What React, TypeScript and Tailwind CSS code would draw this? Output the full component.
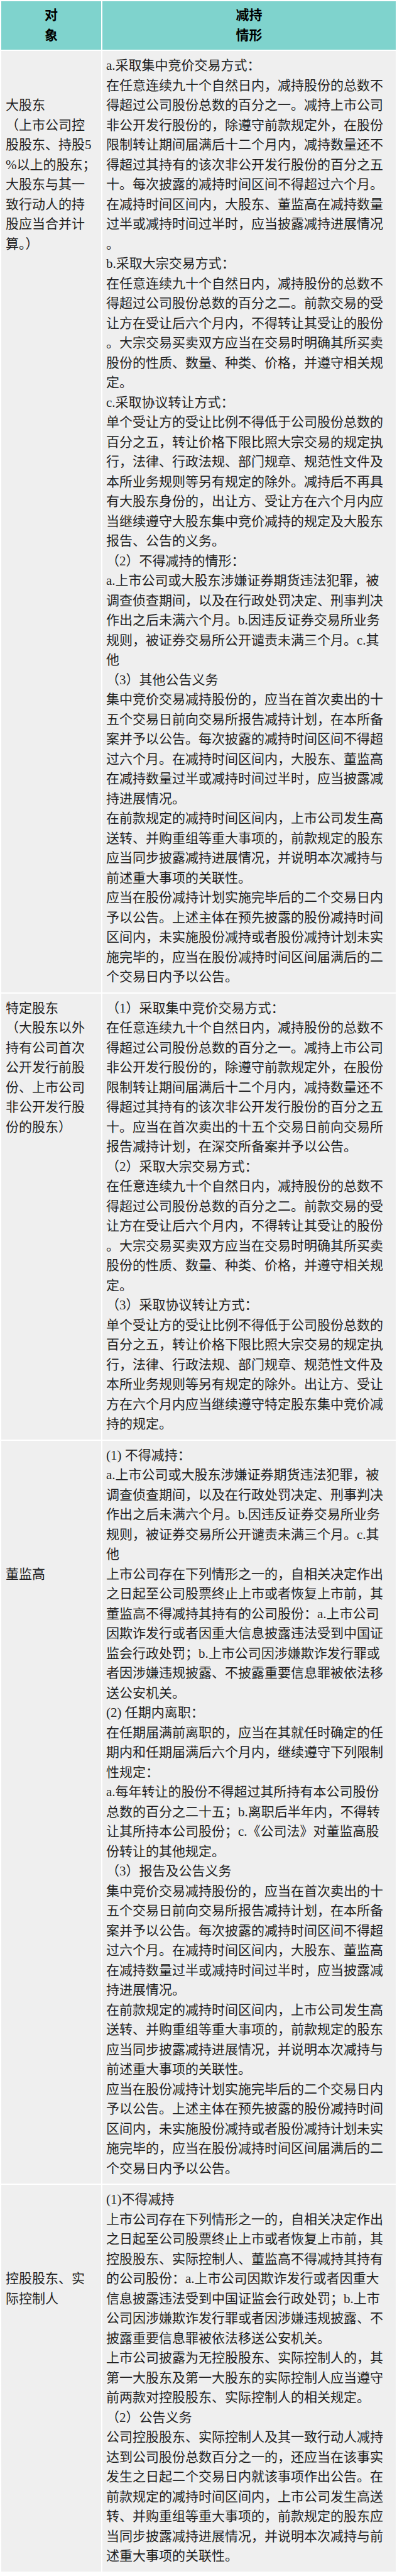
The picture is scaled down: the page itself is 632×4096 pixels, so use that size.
const row1 = [
  "a.采取集中竞价交易方式：",
  "在任意连续九十个自然日内，减持股份的总数不",
  "得超过公司股份总数的百分之一。减持上市公司",
  "非公开发行股份的，除遵守前款规定外，在股份",
  "限制转让期间届满后十二个月内，减持数量还不",
  "得超过其持有的该次非公开发行股份的百分之五",
  "十。每次披露的减持时间区间不得超过六个月。",
  "在减持时间区间内，大股东、董监高在减持数量",
  "过半或减持时间过半时，应当披露减持进展情况",
  "。",
  "b.采取大宗交易方式：",
  "在任意连续九十个自然日内，减持股份的总数不",
  "得超过公司股份总数的百分之二。前款交易的受",
  "让方在受让后六个月内，不得转让其受让的股份",
  "。大宗交易买卖双方应当在交易时明确其所买卖",
  "股份的性质、数量、种类、价格，并遵守相关规",
  "定。",
  "c.采取协议转让方式：",
  "单个受让方的受让比例不得低于公司股份总数的",
  "百分之五，转让价格下限比照大宗交易的规定执",
  "行，法律、行政法规、部门规章、规范性文件及",
  "本所业务规则等另有规定的除外。减持后不再具",
  "有大股东身份的，出让方、受让方在六个月内应",
  "当继续遵守大股东集中竞价减持的规定及大股东",
  "报告、公告的义务。",
  "（2）不得减持的情形：",
  "a.上市公司或大股东涉嫌证券期货违法犯罪，被",
  "调查侦查期间，以及在行政处罚决定、刑事判决",
  "作出之后未满六个月。b.因违反证券交易所业务",
  "规则，被证券交易所公开谴责未满三个月。c.其",
  "他",
  "（3）其他公告义务",
  "集中竞价交易减持股份的，应当在首次卖出的十",
  "五个交易日前向交易所报告减持计划，在本所备",
  "案并予以公告。每次披露的减持时间区间不得超",
  "过六个月。在减持时间区间内，大股东、董监高",
  "在减持数量过半或减持时间过半时，应当披露减",
  "持进展情况。",
  "在前款规定的减持时间区间内，上市公司发生高",
  "送转、并购重组等重大事项的，前款规定的股东",
  "应当同步披露减持进展情况，并说明本次减持与",
  "前述重大事项的关联性。",
  "应当在股份减持计划实施完毕后的二个交易日内",
  "予以公告。上述主体在预先披露的股份减持时间",
  "区间内，未实施股份减持或者股份减持计划未实",
  "施完毕的，应当在股份减持时间区间届满后的二",
  "个交易日内予以公告。",
]

const row2 = [
  "（1）采取集中竞价交易方式：",
  "在任意连续九十个自然日内，减持股份的总数不",
  "得超过公司股份总数的百分之一。减持上市公司",
  "非公开发行股份的，除遵守前款规定外，在股份",
  "限制转让期间届满后十二个月内，减持数量还不",
  "得超过其持有的该次非公开发行股份的百分之五",
  "十。应当在首次卖出的十五个交易日前向交易所",
  "报告减持计划，在深交所备案并予以公告。",
  "（2）采取大宗交易方式：",
  "在任意连续九十个自然日内，减持股份的总数不",
  "得超过公司股份总数的百分之二。前款交易的受",
  "让方在受让后六个月内，不得转让其受让的股份",
  "。大宗交易买卖双方应当在交易时明确其所买卖",
  "股份的性质、数量、种类、价格，并遵守相关规",
  "定。",
  "（3）采取协议转让方式：",
  "单个受让方的受让比例不得低于公司股份总数的",
  "百分之五，转让价格下限比照大宗交易的规定执",
  "行，法律、行政法规、部门规章、规范性文件及",
  "本所业务规则等另有规定的除外。出让方、受让",
  "方在六个月内应当继续遵守特定股东集中竞价减",
  "持的规定。",
]

const row3 = [
  "(1) 不得减持：",
  "a.上市公司或大股东涉嫌证券期货违法犯罪，被",
  "调查侦查期间，以及在行政处罚决定、刑事判决",
  "作出之后未满六个月。b.因违反证券交易所业务",
  "规则，被证券交易所公开谴责未满三个月。c.其",
  "他",
  "上市公司存在下列情形之一的，自相关决定作出",
  "之日起至公司股票终止上市或者恢复上市前，其",
  "董监高不得减持其持有的公司股份：a.上市公司",
  "因欺诈发行或者因重大信息披露违法受到中国证",
  "监会行政处罚；b.上市公司因涉嫌欺诈发行罪或",
  "者因涉嫌违规披露、不披露重要信息罪被依法移",
  "送公安机关。",
  "(2) 任期内离职：",
  "在任期届满前离职的，应当在其就任时确定的任",
  "期内和任期届满后六个月内，继续遵守下列限制",
  "性规定：",
  "a.每年转让的股份不得超过其所持有本公司股份",
  "总数的百分之二十五；b.离职后半年内，不得转",
  "让其所持本公司股份；c.《公司法》对董监高股",
  "份转让的其他规定。",
  "（3）报告及公告义务",
  "集中竞价交易减持股份的，应当在首次卖出的十",
  "五个交易日前向交易所报告减持计划，在本所备",
  "案并予以公告。每次披露的减持时间区间不得超",
  "过六个月。在减持时间区间内，大股东、董监高",
  "在减持数量过半或减持时间过半时，应当披露减",
  "持进展情况。",
  "在前款规定的减持时间区间内，上市公司发生高",
  "送转、并购重组等重大事项的，前款规定的股东",
  "应当同步披露减持进展情况，并说明本次减持与",
  "前述重大事项的关联性。",
  "应当在股份减持计划实施完毕后的二个交易日内",
  "予以公告。上述主体在预先披露的股份减持时间",
  "区间内，未实施股份减持或者股份减持计划未实",
  "施完毕的，应当在股份减持时间区间届满后的二",
  "个交易日内予以公告。",
]

const row4 = [
  "(1)不得减持",
  "上市公司存在下列情形之一的，自相关决定作出",
  "之日起至公司股票终止上市或者恢复上市前，其",
  "控股股东、实际控制人、董监高不得减持其持有",
  "的公司股份：a.上市公司因欺诈发行或者因重大",
  "信息披露违法受到中国证监会行政处罚；b.上市",
  "公司因涉嫌欺诈发行罪或者因涉嫌违规披露、不",
  "披露重要信息罪被依法移送公安机关。",
  "上市公司披露为无控股股东、实际控制人的，其",
  "第一大股东及第一大股东的实际控制人应当遵守",
  "前两款对控股股东、实际控制人的相关规定。",
  "（2）公告义务",
  "公司控股股东、实际控制人及其一致行动人减持",
  "达到公司股份总数百分之一的，还应当在该事实",
  "发生之日起二个交易日内就该事项作出公告。在",
  "前款规定的减持时间区间内，上市公司发生高送",
  "转、并购重组等重大事项的，前款规定的股东应",
  "当同步披露减持进展情况，并说明本次减持与前",
  "述重大事项的关联性。",
]

const rows = [
  {
    label: ["大股东", "（上市公司控", "股股东、持股5", "%以上的股东；", "大股东与其一", "致行动人的持", "股应当合并计", "算。）"],
    pad: "pt-[71px]",
    lines: row1,
  },
  {
    label: ["特定股东", "（大股东以外", "持有公司首次", "公开发行前股", "份、上市公司", "非公开发行股", "份的股东）"],
    pad: "pt-[8px]",
    lines: row2,
  },
  { label: ["董监高"], pad: "pt-[197px]", lines: row3 },
  { label: ["控股股东、实", "际控制人"], pad: "pt-[134px]", lines: row4 },
]

function Lines({ lines }: { lines: string[] }) {
  return (
    <>
      {lines.map((l, i) => (
        <div key={i} className="whitespace-nowrap">
          {l}
        </div>
      ))}
    </>
  )
}

export default function App() {
  return (
    <div
      className="w-[632px] bg-white p-[2px] text-[21px] leading-[31.5px] text-[#1f1f1f]"
      style={{ fontFamily: '"Liberation Serif", "Noto Sans CJK SC", sans-serif' }}
    >
      <div className="grid grid-cols-[159px_1fr] gap-[2px]">
        <div className="flex h-[77px] flex-col items-center justify-center bg-[#7fd3cd] font-bold text-black">
          <div>对</div>
          <div>象</div>
        </div>
        <div className="flex h-[77px] flex-col items-center justify-center bg-[#7fd3cd] font-bold text-black">
          <div>减持</div>
          <div>情形</div>
        </div>
        {rows.map((r, i) => (
          <div key={i} className="contents">
            <div className={`bg-[#efefef] pl-[7px] ${r.pad}`}>
              <Lines lines={r.label} />
            </div>
            <div className="bg-[#efefef] py-[8px] pl-[6px]">
              <Lines lines={r.lines} />
            </div>
          </div>
        ))}
      </div>
    </div>
  )
}
